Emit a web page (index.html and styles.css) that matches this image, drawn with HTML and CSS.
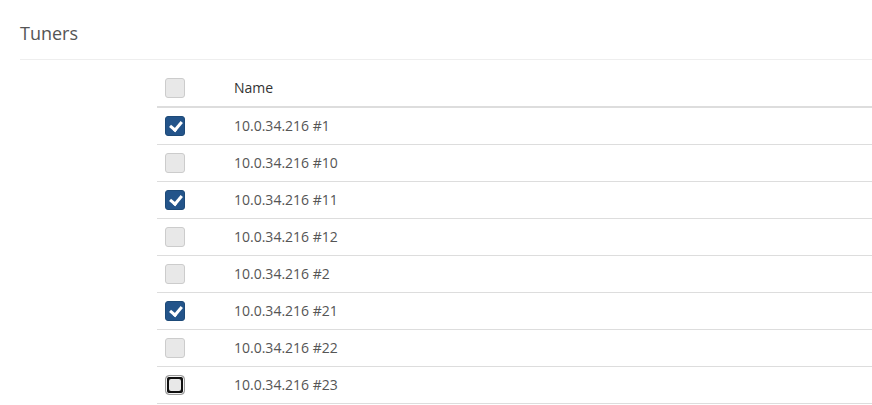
FILE: index.html
```html
<!DOCTYPE html>
<html>
<head>
<meta charset="utf-8">
<link rel="stylesheet" href="styles.css">
</head>
<body>
<div class="page">
  <h1 class="title">Tuners</h1>
  <div class="content">
    <table class="grid">
      <thead>
        <tr><th class="sel"><span class="cb"></span></th><th class="name">Name</th></tr>
      </thead>
      <tbody>
        <tr><td class="sel"><span class="cb on"></span></td><td>10.0.34.216 #1</td></tr>
        <tr><td class="sel"><span class="cb"></span></td><td>10.0.34.216 #10</td></tr>
        <tr><td class="sel"><span class="cb on"></span></td><td>10.0.34.216 #11</td></tr>
        <tr><td class="sel"><span class="cb"></span></td><td>10.0.34.216 #12</td></tr>
        <tr><td class="sel"><span class="cb"></span></td><td>10.0.34.216 #2</td></tr>
        <tr><td class="sel"><span class="cb on"></span></td><td>10.0.34.216 #21</td></tr>
        <tr><td class="sel"><span class="cb"></span></td><td>10.0.34.216 #22</td></tr>
        <tr><td class="sel"><span class="cb focus"></span></td><td>10.0.34.216 #23</td></tr>
      </tbody>
    </table>
  </div>
</div>
</body>
</html>
```
FILE: styles.css
```css
html, body { margin: 0; padding: 0; background: #fff; }
body { font-family: "Open Sans", "Liberation Sans", sans-serif; color: #555; }
.page { padding: 0 0 0 20px; }
.title {
  margin: 0;
  padding: 23px 0 16px;
  font-size: 18px;
  font-weight: 400;
  line-height: 20px;
  color: #555;
  border-bottom: 1px solid #eee;
}
.content { padding: 10px 0 0 137px; }
.grid { width: 100%; border-collapse: collapse; font-size: 14px; }
.grid th, .grid td {
  padding: 8px;
  height: 20px;
  line-height: 20px;
  text-align: left;
  vertical-align: middle;
}
.grid th { border-bottom: 2px solid #ddd; font-weight: 400; color: #333; }
.grid td { border-bottom: 1px solid #ddd; color: #555; }
.grid .sel { width: 53px; }
.cb {
  display: block;
  box-sizing: border-box;
  width: 20px;
  height: 20px;
  border: 1px solid #ccc;
  border-radius: 3px;
  background: #e8e8e8;
  position: relative;
}
.cb.on { background: #23548a; border-color: #1d4a78; }
.cb.on::after {
  content: "";
  position: absolute;
  left: 6px;
  top: 2px;
  width: 5px;
  height: 9px;
  border: solid #fff;
  border-width: 0 3px 3px 0;
  transform: rotate(40deg);
}
.cb.focus { border-color: #999; border-radius: 4px; box-shadow: inset 0 0 0 1px #f4f4f4, inset 0 0 0 3px #111; }
.cb.focus::before {
  content: "";
  position: absolute;
  inset: 1px;
  border: 2px solid #111;
  border-radius: 4px;
}
```
